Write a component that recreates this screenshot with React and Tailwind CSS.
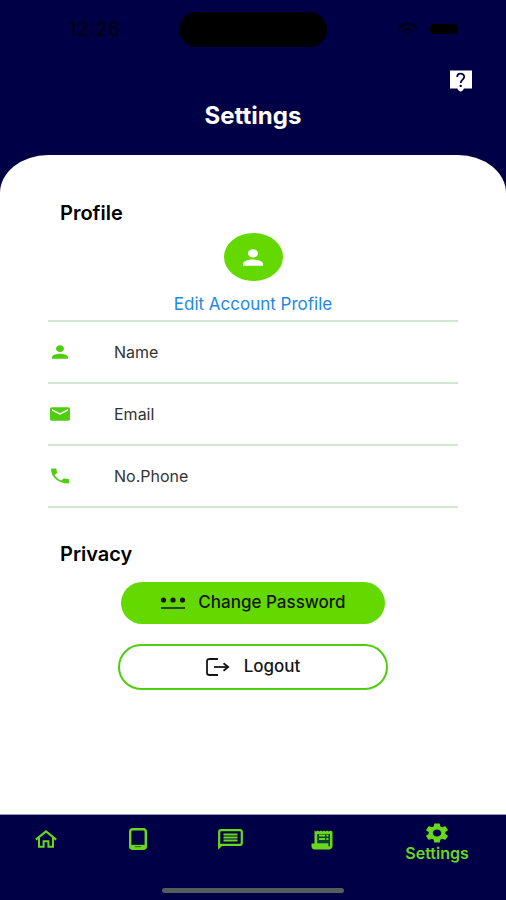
import { MdEmail, MdPerson, MdPhone, MdSettings } from 'react-icons/md';

const profileFields = [
  { label: 'Name', icon: MdPerson },
  { label: 'Email', icon: MdEmail },
  { label: 'No.Phone', icon: MdPhone },
];

const HelpIcon = () => (
  <svg viewBox="0 0 22 22" className="w-[22px] h-[22px]">
    <path d="M0 0.5H22V18.5H14C13 20.5 12 21.5 10.7 21.5C9.4 21.5 8.4 20.5 7.4 18.5H0Z" fill="#fff" />
    <path d="M7.2 7C7.2 2.6 14.2 2.6 14.2 6.8C14.2 9.6 10.7 9.6 10.7 13" fill="none" stroke="#000046" strokeWidth="1.8" />
    <circle cx="10.7" cy="15.9" r="1.2" fill="#000046" />
  </svg>
);

const HomeIcon = () => (
  <svg viewBox="0 0 22 18" fill="none" stroke="currentColor" strokeWidth="2" className="w-[22px] h-[18px]">
    <path d="M0.8 9.6L11 1.4L21.2 9.6" />
    <path d="M4 7.5V16.8H8.6V11.2H13.4V16.8H18V7.5" />
  </svg>
);

const TabletIcon = () => (
  <svg viewBox="0 0 18 22" className="w-[18px] h-[22px]">
    <rect x="1.2" y="1.2" width="15.6" height="19.6" rx="2.6" fill="none" stroke="currentColor" strokeWidth="2.4" />
    <path d="M1.5 16.8H16.5V20.5H1.5Z" fill="currentColor" />
    <path d="M6 18.6H12" stroke="#2f7a2a" strokeWidth="1.2" />
  </svg>
);

const MessageIcon = () => (
  <svg viewBox="0 0 25 21" className="w-[25px] h-[21px]">
    <path d="M1.2 18V3C1.2 2 2 1.2 3 1.2H22C23 1.2 23.8 2 23.8 3V14C23.8 15 23 15.8 22 15.8H3.6Z" fill="none" stroke="currentColor" strokeWidth="2.2" />
    <path d="M0.1 14V20.5L5 15.8Z" fill="currentColor" />
    <path d="M5.5 4.6H19.5V6.6H5.5ZM5.5 7.5H19.5V9.5H5.5ZM5.5 10.4H19.5V12.4H5.5Z" fill="currentColor" />
  </svg>
);

const ReceiptIcon = () => (
  <svg viewBox="0 0 22 20" className="w-[22px] h-5">
    <path
      d="M3.5 0.5L5 1.5L6.6 0.5L8.2 1.5L9.8 0.5L11.4 1.5L13 0.5L14.6 1.5L16.2 0.5L17.8 1.5L19.4 0.5L21.5 1.5V16C21.5 18 20 19.5 18 19.5H3.5C1.5 19.5 0.5 18 0.5 16V13.5H3.5Z"
      fill="currentColor"
    />
    <path d="M6.2 13.2V4H19V15.6C19 16.8 17.4 16.8 17.4 15.6V13.2Z" fill="#123f35" />
    <path d="M8 4.6H14V6.6H8ZM15.4 4.6H17.4V6.6H15.4ZM8 8H14V10H8ZM15.4 8H17.4V10H15.4Z" fill="currentColor" />
  </svg>
);

const PasswordIcon = () => (
  <svg viewBox="0 0 26 14" fill="currentColor" className="w-[26px] h-[14px]">
    <circle cx="3.5" cy="4" r="2.6" />
    <circle cx="13" cy="4" r="2.6" />
    <circle cx="22.5" cy="4" r="2.6" />
    <rect x="1" y="11" width="24" height="2" opacity="0.75" />
  </svg>
);

const LogoutIcon = () => (
  <svg viewBox="0 0 24 18" fill="none" stroke="currentColor" strokeWidth="1.8" className="w-6 h-[18px]">
    <path d="M12 1H3.5C2 1 1 1.8 1 3V15C1 16.2 2 17 3.5 17H12" />
    <path d="M8 9H22" />
    <path d="M17.5 5.2L22.2 9L17.5 12.8" />
  </svg>
);

const StatusBar = () => (
  <div className="grid grid-cols-3 items-center h-[58px] text-[#00001c]">
    <span className="pl-[68px] text-xl font-semibold">12:26</span>
    <div className="w-[148px] h-[35px] rounded-full bg-black justify-self-center" />
    <div className="flex items-center justify-end gap-3 pr-12">
      <svg viewBox="0 0 20 13" fill="none" stroke="currentColor" strokeWidth="2.4" className="w-5 h-[13px]">
        <path d="M0.8 4.4C6 0 14 0 19.2 4.4" />
        <path d="M4.5 8C7.5 5.4 12.5 5.4 15.5 8" />
        <circle cx="10" cy="11" r="1.8" fill="currentColor" stroke="none" />
      </svg>
      <div className="w-7 h-[10px] rounded-sm bg-black" />
    </div>
  </div>
);

const App = () => {
  return (
    <div className="flex flex-col min-h-screen bg-[#000046] font-['Inter',sans-serif] text-[#151515]">
      <StatusBar />
      <header className="flex flex-col h-[97px] pt-3">
        <button className="self-end mr-[34px]" aria-label="Help">
          <HelpIcon />
        </button>
        <h1 className="mt-[10px] text-center text-2xl leading-7 font-bold text-white">Settings</h1>
      </header>

      <main className="flex-1 bg-white rounded-t-[48px_38px] px-12 pt-[46px]">
        <h2 className="pl-3 text-xl leading-6 font-semibold text-black">Profile</h2>
        <div className="flex flex-col items-center pt-2">
          <div className="flex items-center justify-center w-[59px] h-12 rounded-[50%] bg-[#64d900] text-white">
            <MdPerson preserveAspectRatio="none" className="w-[30px] h-[25px]" />
          </div>
          <a href="#profile" className="mt-[11px] text-[17px] leading-6 text-[#1e88e5]">Edit Account Profile</a>
        </div>
        <ul className="mt-1 border-t-2 border-[#cfe8cf]">
          {profileFields.map(({ label, icon: Icon }) => (
            <li key={label} className="flex items-center gap-[42px] h-[62px] border-b-2 border-[#cfe8cf] text-base text-[#333]">
              <Icon preserveAspectRatio="none" className="w-6 h-5 text-[#4fce0f]" />
              {label}
            </li>
          ))}
        </ul>

        <h2 className="mt-[34px] pl-3 text-xl leading-6 font-semibold text-black">Privacy</h2>
        <div className="flex flex-col items-center gap-5 pt-4">
          <button className="flex items-center justify-center gap-3 w-[264px] h-[42px] rounded-full bg-[#64d900] text-[17px] font-medium">
            <PasswordIcon />
            Change Password
          </button>
          <button className="flex items-center justify-center gap-[14px] w-[270px] h-[46px] rounded-full border-2 border-[#4fce0f] text-[17px] font-medium">
            <LogoutIcon />
            Logout
          </button>
        </div>
      </main>

      <nav className="h-[86px] border-t border-[#9a9ab8] text-[#68d81c]">
        <div className="flex h-[73px] pt-[6px]">
          <a href="#home" aria-label="Home" className="flex justify-center w-[92px] pt-[9px]">
            <HomeIcon />
          </a>
          <a href="#device" aria-label="Device" className="flex justify-center w-[92px] pt-[7px]">
            <TabletIcon />
          </a>
          <a href="#messages" aria-label="Messages" className="flex justify-center w-[92px] pt-2">
            <MessageIcon />
          </a>
          <a href="#receipts" aria-label="Receipts" className="flex justify-center w-[92px] pt-[9px]">
            <ReceiptIcon />
          </a>
          <a href="#settings" className="flex flex-col flex-1 items-center text-base leading-4 font-semibold">
            <MdSettings preserveAspectRatio="none" className="w-7 h-6" />
            Settings
          </a>
        </div>
        <div className="w-[182px] h-[5px] mx-auto rounded-full bg-[#565b5b]" />
      </nav>
    </div>
  );
};

export default App;
